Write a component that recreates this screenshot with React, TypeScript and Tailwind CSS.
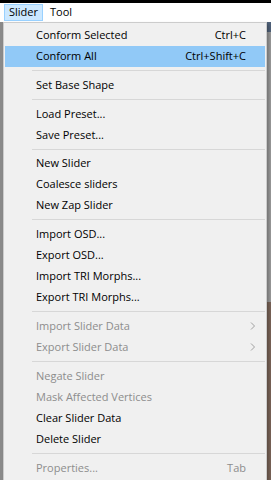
import React from 'react';

type Entry =
  | { kind: 'item'; label: string; shortcut?: string; disabled?: boolean; active?: boolean; submenu?: boolean }
  | { kind: 'sep' };

const entries: Entry[] = [
  { kind: 'item', label: 'Conform Selected', shortcut: 'Ctrl+C' },
  { kind: 'item', label: 'Conform All', shortcut: 'Ctrl+Shift+C', active: true },
  { kind: 'sep' },
  { kind: 'item', label: 'Set Base Shape' },
  { kind: 'sep' },
  { kind: 'item', label: 'Load Preset...' },
  { kind: 'item', label: 'Save Preset...' },
  { kind: 'sep' },
  { kind: 'item', label: 'New Slider' },
  { kind: 'item', label: 'Coalesce sliders' },
  { kind: 'item', label: 'New Zap Slider' },
  { kind: 'sep' },
  { kind: 'item', label: 'Import OSD...' },
  { kind: 'item', label: 'Export OSD...' },
  { kind: 'item', label: 'Import TRI Morphs...' },
  { kind: 'item', label: 'Export TRI Morphs...' },
  { kind: 'sep' },
  { kind: 'item', label: 'Import Slider Data', disabled: true, submenu: true },
  { kind: 'item', label: 'Export Slider Data', disabled: true, submenu: true },
  { kind: 'sep' },
  { kind: 'item', label: 'Negate Slider', disabled: true },
  { kind: 'item', label: 'Mask Affected Vertices', disabled: true },
  { kind: 'item', label: 'Clear Slider Data' },
  { kind: 'item', label: 'Delete Slider' },
  { kind: 'sep' },
  { kind: 'item', label: 'Properties...', shortcut: 'Tab', disabled: true },
];

const App: React.FC = () => {
  return (
    <div
      className="relative w-[271px] h-[480px] overflow-hidden bg-[#d4d4d4] text-[11px]"
      style={{ fontFamily: '"Open Sans", "Noto Sans", sans-serif' }}
    >
      {/* window chrome behind the menu */}
      <div className="h-[3px] bg-black" />
      <div className="flex h-[19px] items-start bg-white pl-[4px] pt-[1px] text-black">
        <div className="flex h-[17px] w-[39px] items-center justify-center border border-[#99d1ff] bg-[#cce8ff]">Slider</div>
        <div className="flex h-[17px] items-center pl-[7px]">Tool</div>
      </div>
      <div className="flex h-[458px]">
        <div className="w-[3px] bg-[#8a8a8a]" />
        <div className="flex flex-1 flex-col">
          <div className="flex-1 bg-[#e6e6e6]" />
          <div className="flex h-[3px]">
            <div className="w-[77px] bg-[#dcdcdc]" />
            <div className="w-[75px] bg-[#8a6e5e]" />
            <div className="w-[20px] bg-[#d0d0d0]" />
            <div className="w-[3px] bg-[#c02020]" />
            <div className="w-[3px] bg-[#20c020]" />
            <div className="w-[30px] bg-[#7a5a50]" />
            <div className="w-[5px] bg-[#2030e0]" />
            <div className="w-[12px] bg-black" />
            <div className="w-[20px] bg-[#8a6e5e]" />
            <div className="w-[8px] bg-[#2030e0]" />
            <div className="flex-1 bg-[#c02020]" />
          </div>
        </div>
        <div className="flex w-[4px] flex-col">
          <div className="h-[10px] bg-[#50627a]" />
          <div className="h-[270px] bg-[#9a9a9a]" />
          <div className="flex-1 bg-[#7a6458]" />
        </div>
      </div>

      {/* dropdown menu */}
      <div className="absolute left-[3px] top-[22px] w-[264px] border border-[#cccccc] bg-[#f0f0f0] py-[2px] px-[1px] shadow-[2px_2px_3px_rgba(0,0,0,0.25)]">
        {entries.map((e, i) =>
          e.kind === 'sep' ? (
            <div key={i} className="flex h-[7.4px] items-center pl-[27px]">
              <div className="h-px w-full bg-[#d7d7d7]" />
            </div>
          ) : (
            <div
              key={i}
              className={`flex h-[21.15px] items-center pl-[31px] pr-[19px] ${
                e.active ? 'bg-[#91c9f7]' : ''
              } ${e.disabled ? 'text-[#8d8d8d]' : 'text-black'}`}
            >
              <span className="flex-1 whitespace-nowrap">{e.label}</span>
              {e.shortcut && <span className="whitespace-nowrap">{e.shortcut}</span>}
              {e.submenu && (
                <svg width="8" height="10" viewBox="0 0 8 10" className="mr-[-11px]">
                  <path d="M2 1.5 L5.5 5 L2 8.5" fill="none" stroke="#a0a0a0" strokeWidth="1" />
                </svg>
              )}
            </div>
          )
        )}
      </div>
    </div>
  );
};

export default App;
